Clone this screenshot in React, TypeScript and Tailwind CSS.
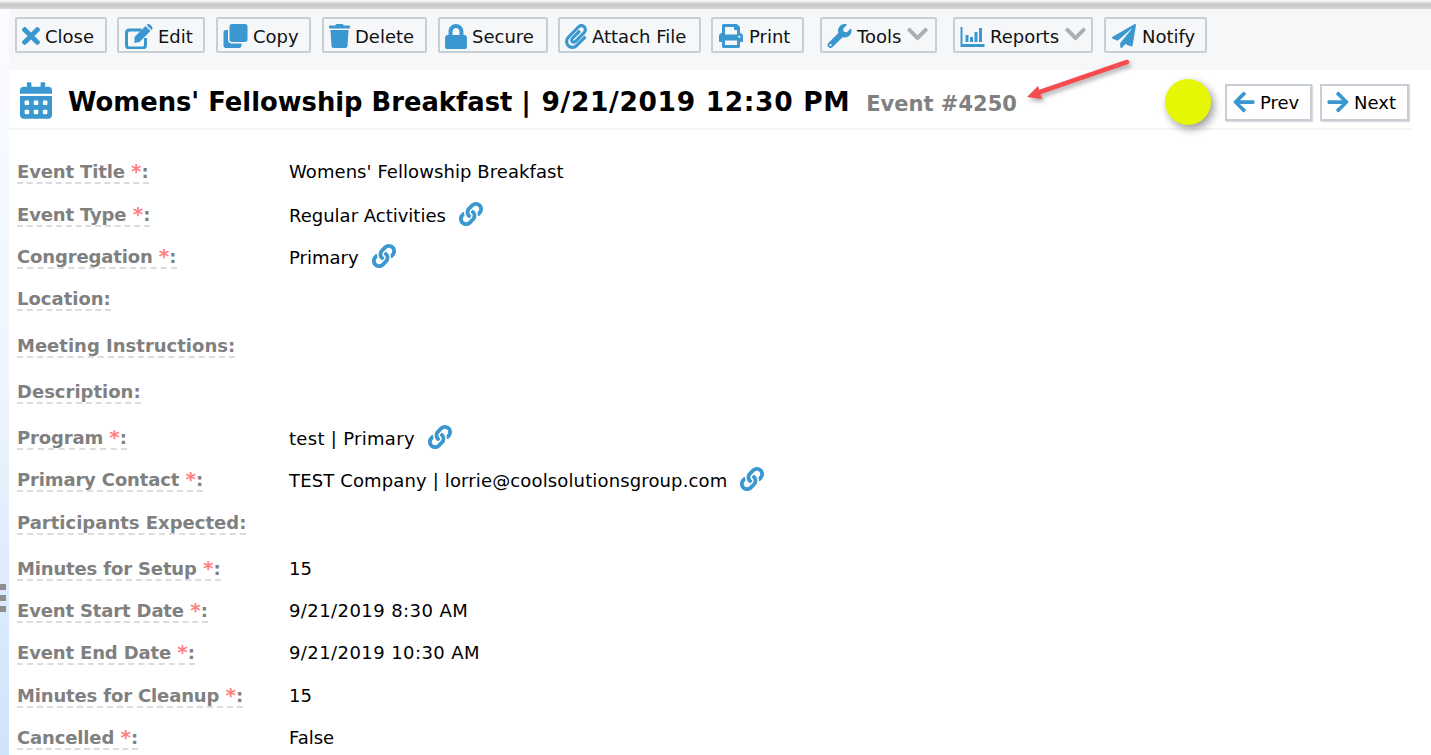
import React from "react";
import { FaTimes, FaClone, FaTrash, FaLock, FaPaperclip, FaPrint, FaWrench, FaChevronDown, FaPaperPlane, FaArrowLeft, FaArrowRight, FaLink, FaCalendarAlt } from "react-icons/fa";

function EditIcon({ className }: { className?: string }) {
  return (
    <svg className={className} viewBox="0 0 28 25" fill="none">
      <path d="M17 6 H5 Q2 6 2 9 V21 Q2 24 5 24 H18 Q21 24 21 21 V14" stroke="currentColor" strokeWidth="3" />
      <path d="M10 13 L21 2 L26 7 L15 18 L10 19 Z" fill="currentColor" />
      <path d="M22.5 0.5 Q24 -0.5 25.5 0.5 L27.5 2.5 Q28.5 4 27.5 5.5 L27 6 L22 1 Z" fill="currentColor" />
    </svg>
  );
}

function ReportIcon({ className }: { className?: string }) {
  return (
    <svg className={className} viewBox="0 0 24 24" fill="currentColor">
      <path d="M0 3 H2 V20 H24 V23 H0 Z" />
      <rect x="5" y="11" width="3" height="7" />
      <rect x="9.5" y="13" width="3" height="5" />
      <rect x="14" y="8" width="3" height="10" />
      <rect x="18.5" y="4" width="3" height="14" />
    </svg>
  );
}

type Btn = { label: string; Icon: React.ComponentType<{ className?: string }>; w: string; ml: string; iconCls: string; chevron?: boolean };

const buttons: Btn[] = [
  { label: "Close", Icon: FaTimes, w: "w-[92px]", ml: "ml-0", iconCls: "h-[28px] w-[18px]" },
  { label: "Edit", Icon: EditIcon, w: "w-[88px]", ml: "ml-[10px]", iconCls: "h-[25px] w-[29px]" },
  { label: "Copy", Icon: FaClone, w: "w-[95px]", ml: "ml-[11px]", iconCls: "h-[24px] w-[25px]" },
  { label: "Delete", Icon: FaTrash, w: "w-[105px]", ml: "ml-[11px]", iconCls: "h-[24px] w-[21px]" },
  { label: "Secure", Icon: FaLock, w: "w-[110px]", ml: "ml-[11px]", iconCls: "h-[25px] w-[22px]" },
  { label: "Attach File", Icon: FaPaperclip, w: "w-[143px]", ml: "ml-[10px]", iconCls: "h-[25px] w-[22px]" },
  { label: "Print", Icon: FaPrint, w: "w-[93px]", ml: "ml-[10px]", iconCls: "h-[24px] w-[26px]" },
  { label: "Tools", Icon: FaWrench, w: "w-[117px]", ml: "ml-[16px]", iconCls: "h-[24px] w-[25px]", chevron: true },
  { label: "Reports", Icon: ReportIcon, w: "w-[140px]", ml: "ml-[16px]", iconCls: "h-[24px] w-[25px]", chevron: true },
  { label: "Notify", Icon: FaPaperPlane, w: "w-[103px]", ml: "ml-[11px]", iconCls: "h-[24px] w-[26px]" },
];

type Row = { label: string; req?: boolean; value?: string; link?: boolean; h: string; valueCls?: string; labelCls?: string };

const rows: Row[] = [
  { label: "Event Title", req: true, value: "Womens' Fellowship Breakfast", h: "h-[44px]", valueCls: "tracking-[0.07px]" },
  { label: "Event Type", req: true, value: "Regular Activities", link: true, h: "h-[42px]", labelCls: "-mt-px" },
  { label: "Congregation", req: true, value: "Primary", link: true, h: "h-[42px]", labelCls: "-mt-px" },
  { label: "Location", h: "h-[46px]", labelCls: "-mt-px" },
  { label: "Meeting Instructions", h: "h-[46px]" },
  { label: "Description", h: "h-[47px]" },
  { label: "Program", req: true, value: "test | Primary", link: true, h: "h-[42px]", labelCls: "-mt-px", valueCls: "tracking-[0.3px]" },
  { label: "Primary Contact", req: true, value: "TEST Company | lorrie@coolsolutionsgroup.com", link: true, h: "h-[43px]", labelCls: "-mt-px", valueCls: "tracking-[0.14px]" },
  { label: "Participants Expected", h: "h-[45px]", labelCls: "-mt-px" },
  { label: "Minutes for Setup", req: true, value: "15", h: "h-[42px]" },
  { label: "Event Start Date", req: true, value: "9/21/2019 8:30 AM", h: "h-[42px]", valueCls: "tracking-[0.42px]" },
  { label: "Event End Date", req: true, value: "9/21/2019 10:30 AM", h: "h-[43px]", valueCls: "tracking-[0.42px]" },
  { label: "Minutes for Cleanup", req: true, value: "15", h: "h-[42px]" },
  { label: "Cancelled", req: true, value: "False", h: "h-[42px]" },
];

export default function App() {
  return (
    <div className="relative h-[755px] w-[1431px] overflow-hidden bg-white font-['DejaVu_Sans',Verdana,sans-serif] text-[18px] text-black">
      <div className="h-[9px] bg-gradient-to-b from-[#ffffff] via-[#c4c5c7] to-[#d6d7d9]" />
      <div className="flex h-[746px]">
        <div className="relative w-[9px] shrink-0 bg-gradient-to-b from-[#fbfcff] via-[#eef5fe] to-[#cfe3fa]">
          <div className="absolute left-0 top-[575px] flex flex-col gap-[5px]">
            <div className="h-[6px] w-[6px] bg-[#8f8f8f]" />
            <div className="h-[6px] w-[6px] bg-[#8f8f8f]" />
            <div className="h-[6px] w-[6px] bg-[#8f8f8f]" />
          </div>
        </div>
        <div className="min-w-0 flex-1">
          <div className="flex h-[61px] items-start bg-[#f5f7f9] pl-[6px] pt-[8px]">
            {buttons.map((b) => (
              <div key={b.label} className={`${b.w} ${b.ml} flex h-[36px] shrink-0 items-center gap-[5px] rounded-[2px] border-2 border-[#c8ced6] bg-[#f5f7f9] pl-[5px] pt-[2px] text-[#111]`}>
                <b.Icon className={`${b.iconCls} shrink-0 text-[#3b97d0]`} />
                <span className="whitespace-nowrap pt-[2px] leading-none">{b.label}</span>
                {b.chevron && <FaChevronDown className="-mt-[4px] ml-[1px] h-[24px] w-[21px] shrink-0 text-[#a9aeb5]" />}
              </div>
            ))}
          </div>
          <div className="mr-[18px] flex h-[60px] items-center border-b-2 border-[#f4f5f7] pl-[11px] pt-[6px]">
            <FaCalendarAlt className="-mt-[3px] h-[37px] w-[32px] shrink-0 text-[#3b97d0]" />
            <h1 className="ml-[16px] whitespace-nowrap text-[25.8px] font-bold leading-none">
              Womens' Fellowship Breakfast <span className="text-[26.5px] tracking-[0.65px]">| 9/21/2019 12:30 PM</span>
            </h1>
            <span className="ml-[16px] whitespace-nowrap pt-[5px] text-[21px] font-bold text-[#808080]">Event #4250</span>
            <div className="ml-auto mr-[4px] flex gap-[8px]">
              <div className="flex h-[37px] w-[87px] items-center gap-[5px] border-2 border-[#c8ced6] pl-[6px] shadow-[1px_1px_1px_#d8dce0]">
                <FaArrowLeft className="h-[24px] w-[22px] text-[#3b97d0]" />
                <span>Prev</span>
              </div>
              <div className="flex h-[37px] w-[89px] items-center gap-[5px] border-2 border-[#c8ced6] pl-[5px] shadow-[1px_1px_1px_#d8dce0]">
                <FaArrowRight className="h-[24px] w-[22px] text-[#3b97d0]" />
                <span>Next</span>
              </div>
            </div>
          </div>
          <div className="pt-[28px]">
            {rows.map((r) => (
              <div key={r.label} className={`${r.h} flex items-start pl-[8px]`}>
                <div className={`w-[272px] shrink-0 ${r.labelCls ?? ""}`}>
                  <span className="border-b-2 border-dashed border-[#dcdcdc] font-bold text-[#808080]">
                    {r.req ? <span className="tracking-[-0.15px]">{r.label}</span> : r.label}
                    {r.req && (
                      <>
                        {" "}
                        <span className="text-[20px] leading-none text-[#ff8080]">*</span>
                      </>
                    )}
                    :
                  </span>
                </div>
                <div className="flex items-center whitespace-nowrap">
                  <span className={r.valueCls}>{r.value}</span>
                  {r.link && <FaLink className="-mt-[3px] ml-[13px] h-[24px] w-[24px] text-[#3b97d0]" />}
                </div>
              </div>
            ))}
          </div>
        </div>
      </div>
      <div className="absolute left-[1165px] top-[79px] h-[46px] w-[46px] rounded-full bg-[#e6f706] shadow-[3px_4px_8px_rgba(0,0,0,0.4)]" />
      <svg className="absolute left-[1020px] top-[55px] drop-shadow-[2px_3px_2px_rgba(0,0,0,0.3)]" width="115" height="50" viewBox="0 0 115 50">
        <path d="M107 7 L20 37" stroke="#f44c4f" strokeWidth="4.5" strokeLinecap="round" fill="none" />
        <path d="M7 42 L18 31 L22 44 Z" fill="#f44c4f" />
      </svg>
    </div>
  );
}
